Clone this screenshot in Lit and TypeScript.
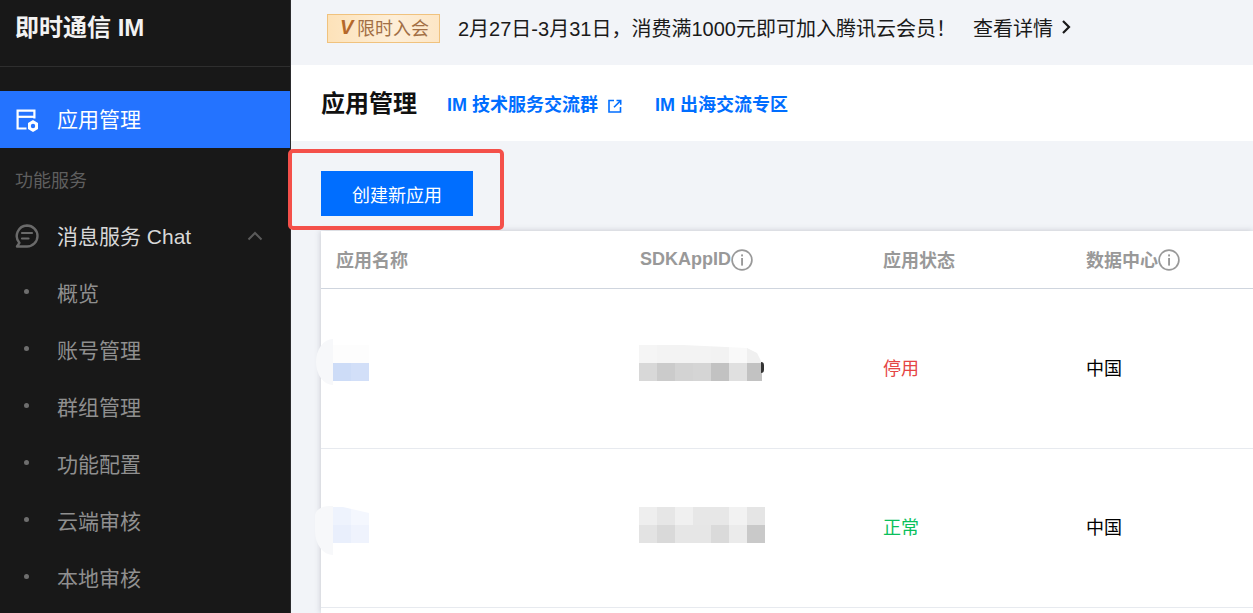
import { LitElement, html, css, svg } from "lit";
import { customElement } from "lit/decorators.js";

const FONT = css`"Liberation Sans", "Noto Sans CJK SC", sans-serif`;

type Mosaic = string[][];

const nameRow1: Mosaic = [
  ["#fdfdfd", "#fdfdfd"],
  ["#cddcf7", "#d2dff8"],
];
const nameRow2: Mosaic = [
  ["#eef3fd", "#f4f7fe"],
  ["#e9effc", "#eff3fd"],
];
const idRow1: Mosaic = [
  ["#f5f5f5", "#f3f3f3", "#f3f3f3", "#f3f3f3", "#f2f2f2", "#f9f9f9", "#f0f0f0"],
  ["#d8d8d8", "#cbcbcb", "#d3d3d3", "#d5d5d5", "#c2c2c2", "#e0e0e0", "#c2c2c2"],
];
const idRow2: Mosaic = [
  ["#eeeeee", "#e6e6e6", "#f0f0f0", "#e7e7e7", "#e7e7e7", "#f2f2f2", "#e5e5e5"],
  ["#e3e3e3", "#d9d9d9", "#e6e6e6", "#e6e6e6", "#dadada", "#ebebeb", "#c9c9c9"],
];

const infoIcon = svg`<svg class="info" viewBox="0 0 22 22" width="22" height="22" fill="none">
  <circle cx="11" cy="11" r="9.9" stroke="#999" stroke-width="1.7"/>
  <rect x="10.1" y="5.4" width="1.9" height="2" fill="#999"/>
  <rect x="10.1" y="9" width="1.9" height="7.6" fill="#999"/>
</svg>`;

@customElement("app-root")
export class AppRoot extends LitElement {
  static styles = css`
    :host {
      display: block;
      width: 1253px;
      height: 613px;
      overflow: hidden;
      font-family: ${FONT};
      position: relative;
    }
    .page {
      display: flex;
      height: 613px;
      background: #f2f4f8;
    }
    .side {
      flex: 0 0 290px;
      background: #181818;
      border-right: 1px solid #2b2b2d;
      display: flex;
      flex-direction: column;
      overflow: hidden;
    }
    .brand {
      height: 67px;
      flex: none;
      box-sizing: border-box;
      border-bottom: 1px solid #2e2e2e;
      padding: 10px 0 0 15px;
      font-size: 24px;
      line-height: 36px;
      font-weight: 700;
      color: #f2f2f2;
    }
    .brand-gap { height: 24px; flex: none; }
    .item {
      height: 57px;
      flex: none;
      display: flex;
      align-items: center;
      font-size: 21px;
      color: #d8d8d8;
    }
    .item .ic {
      width: 42px;
      padding-left: 15px;
      display: flex;
      flex: none;
    }
    .item.active {
      background: #2473ff;
      color: #fff;
    }
    .item.active .label { margin-bottom: 4px; }
    .item.chat .ic { margin-top: 3px; }
    .item .chev { margin-left: auto; margin-right: 27px; margin-top: 3px; display: flex; }
    .section {
      height: 58px;
      flex: none;
      box-sizing: border-box;
      padding: 20px 0 0 15px;
      font-size: 18px;
      line-height: 26px;
      color: #5f5f5f;
    }
    .sub {
      height: 57px;
      flex: none;
      display: flex;
      align-items: center;
      font-size: 21px;
      color: #8f8f8f;
    }
    .sub .dot {
      width: 5px;
      height: 5px;
      border-radius: 50%;
      background: #6e6e6e;
      margin: 0 28px 0 24px;
      flex: none;
    }

    .main {
      flex: 1;
      min-width: 0;
      display: flex;
      flex-direction: column;
    }
    .banner {
      height: 65px;
      flex: none;
      display: flex;
      align-items: center;
      padding-left: 36px;
      font-size: 20px;
      color: #1a1a1a;
    }
    .tag {
      box-sizing: border-box;
      height: 29px;
      width: 113px;
      display: flex;
      align-items: center;
      padding: 0 0 2px 12px;
      margin-right: 18px;
      margin-top: -9px;
      border: 1px solid #f0c27e;
      background: linear-gradient(90deg, #fde2b9 0%, #fdeed8 60%, #fde6c6 100%);
      color: #a26f45;
      font-size: 18px;
    }
    .tag b {
      font-style: italic;
      font-weight: 700;
      font-size: 20px;
      color: #b5682a;
      width: 17px;
      flex: none;
    }
    .banner .txt { margin-top: -11px; width: 515px; flex: none; }
    .more {
      margin-top: -11px;
      display: flex;
      align-items: center;
      gap: 8px;
    }
    .head {
      height: 76px;
      flex: none;
      background: #fff;
      display: flex;
      align-items: center;
      padding-left: 30px;
    }
    .head h1 {
      margin: 0 0 4px;
      font-size: 24px;
      font-weight: 700;
      color: #111;
      width: 126px;
      flex: none;
    }
    .link {
      font-size: 18px;
      font-weight: 700;
      color: #006eff;
      display: flex;
      align-items: center;
      gap: 10px;
    }
    .link svg { margin-top: 5px; }
    .link + .link { margin-left: 33px; }
    .tools {
      height: 90px;
      flex: none;
      box-sizing: border-box;
      padding: 30px 0 0 30px;
    }
    .btn {
      width: 152px;
      height: 45px;
      background: #006eff;
      color: #fff;
      font-size: 18px;
      display: flex;
      align-items: center;
      justify-content: center;
    }
    .table {
      margin-left: 30px;
      background: #fff;
      flex: 1;
      box-shadow: 0 0 6px rgba(54, 58, 80, 0.25);
      min-height: 0;
    }
    .row {
      display: grid;
      grid-template-columns: 304px 243px 203px 1fr;
      padding-left: 15px;
      align-items: center;
      font-size: 18px;
      color: #000;
      box-sizing: border-box;
    }
    .row.hd {
      height: 58px;
      padding-bottom: 2px;
      border-bottom: 1px solid #cfd5de;
      color: #999;
      font-weight: 700;
    }
    .row.body {
      height: 160px;
      padding-bottom: 4px;
      border-bottom: 1px solid #e7eaef;
    }
    .row.body.r2 { height: 159px; }
    .hcell { display: flex; align-items: center; }
    .hcell .latin { margin-top: 2px; }
    .hcell .info { margin-top: 2px; }
    .off { color: #e54545; }
    .on { color: #0abf5b; }
    .blurred { display: flex; align-items: flex-start; height: 36px; }
    .name-blur { margin-left: -3px; }
    .id-blur { margin-left: -1px; position: relative; }
    .r1 .blurred { margin-top: -7px; }
    .r2 .blurred { margin-top: -2px; }
    .bulge {
      width: 17px;
      height: 46px;
      background: #f7f8fa;
      border-radius: 17px 0 0 17px / 23px 0 0 23px;
      margin-left: -17px;
      margin-top: -6px;
      flex: none;
    }
    .r2 .bulge {
      width: 18px;
      height: 49px;
      margin-left: -18px;
      margin-top: -1px;
      border-radius: 14px 0 0 18px / 10px 0 0 24px;
    }
    .mosaic { display: grid; grid-auto-rows: 18px; }
    .mosaic span { display: block; width: 18px; height: 18px; }
    .r1 .id-blur .mosaic {
      clip-path: polygon(0 0, 44px 0, 108px 3px, 118px 8px, 123px 18px, 123px 36px, 0 36px);
    }
    .r1 .id-blur::after {
      content: "";
      position: absolute;
      left: 122px;
      top: 17px;
      width: 3px;
      height: 11px;
      background: #333;
      border-radius: 0 3px 3px 0;
    }
    .r2 .name-blur .mosaic {
      clip-path: polygon(0 0, 10px 0, 36px 6px, 36px 36px, 0 36px);
    }
    .mark {
      position: absolute;
      left: 288px;
      top: 149px;
      width: 216px;
      height: 81px;
      box-sizing: border-box;
      border: 4px solid #f4504a;
      border-radius: 5px;
      pointer-events: none;
    }
  `;

  private mosaic(rows: Mosaic) {
    return html`<div
      class="mosaic"
      style="grid-template-columns:repeat(${rows[0].length},18px)"
    >
      ${rows.flat().map((c) => html`<span style="background:${c}"></span>`)}
    </div>`;
  }

  private bodyRow(rowCls: string, name: Mosaic, id: Mosaic, status: string, cls: string) {
    return html`<div class="row body ${rowCls}">
      <div class="blurred name-blur"><div class="bulge"></div>${this.mosaic(name)}</div>
      <div class="blurred id-blur">${this.mosaic(id)}</div>
      <div class=${cls}>${status}</div>
      <div>中国</div>
    </div>`;
  }

  render() {
    const subs = ["概览", "账号管理", "群组管理", "功能配置", "云端审核", "本地审核"];
    return html`<div class="page">
        <aside class="side">
          <div class="brand">即时通信 IM</div>
          <div class="brand-gap"></div>
          <div class="item active">
            <span class="ic">
              <svg width="24" height="24" viewBox="0 0 24 24" fill="none">
                <path d="M11.5 20.5H2.6V2.6H19.4V10.5" stroke="#fff" stroke-width="2.2"/>
                <path d="M2.6 8.8H19.4" stroke="#fff" stroke-width="2.2"/>
                <path d="M18 12l5 3v6l-5 3-5-3v-6z" fill="#fff"/>
                <circle cx="18" cy="18" r="2.2" fill="#2473ff"/>
              </svg>
            </span>
            <span class="label">应用管理</span>
          </div>
          <div class="section">功能服务</div>
          <div class="item chat">
            <span class="ic">
              <svg width="24" height="24" viewBox="0 0 24 24" fill="none">
                <path d="M12 1.5a10.5 10.5 0 0 1 0 21H2l2.4-3.6A10.5 10.5 0 0 1 12 1.5z" stroke="#6a6a6a" stroke-width="2.4" stroke-linejoin="round"/>
                <path d="M7 9h10M7 14.5h6.5" stroke="#6a6a6a" stroke-width="2.2" stroke-linecap="round"/>
              </svg>
            </span>
            消息服务 Chat
            <span class="chev">
              <svg width="16" height="10" viewBox="0 0 16 10" fill="none">
                <path d="M1.5 8.5L8 2l6.5 6.5" stroke="#5a5a5a" stroke-width="2"/>
              </svg>
            </span>
          </div>
          ${subs.map((s) => html`<div class="sub"><span class="dot"></span>${s}</div>`)}
        </aside>
        <main class="main">
          <div class="banner">
            <div class="tag"><b>V</b>限时入会</div>
            <div class="txt">2月27日-3月31日，消费满1000元即可加入腾讯云会员！</div>
            <div class="more">
              查看详情
              <svg width="10" height="16" viewBox="0 0 10 16" fill="none">
                <path d="M2 2l6 6-6 6" stroke="#1a1a1a" stroke-width="2.2"/>
              </svg>
            </div>
          </div>
          <div class="head">
            <h1>应用管理</h1>
            <div class="link">
              IM 技术服务交流群
              <svg width="14" height="14" viewBox="0 0 14 14" fill="none">
                <path d="M6 1.5H1v11.5h11.5V8" stroke="#006eff" stroke-width="1.6"/>
                <path d="M8.5 1.5h4.2v4.2M12.2 2L6 8.2" stroke="#006eff" stroke-width="1.6"/>
              </svg>
            </div>
            <div class="link">IM 出海交流专区</div>
          </div>
          <div class="tools"><div class="btn">创建新应用</div></div>
          <div class="table">
            <div class="row hd">
              <div class="hcell">应用名称</div>
              <div class="hcell"><span class="latin">SDKAppID</span>${infoIcon}</div>
              <div class="hcell">应用状态</div>
              <div class="hcell">数据中心${infoIcon}</div>
            </div>
            ${this.bodyRow("r1", nameRow1, idRow1, "停用", "off")}
            ${this.bodyRow("r2", nameRow2, idRow2, "正常", "on")}
          </div>
        </main>
      </div>
      <div class="mark"></div>`;
  }
}
